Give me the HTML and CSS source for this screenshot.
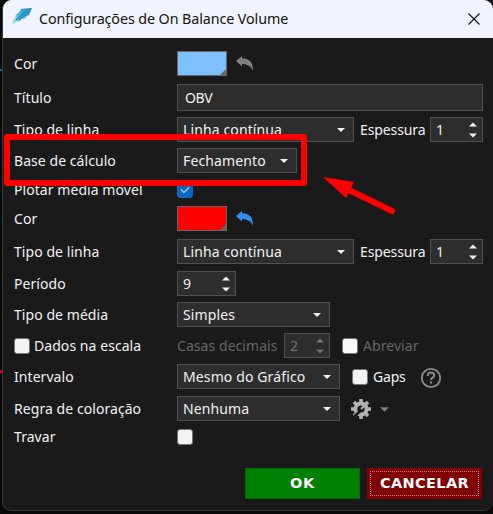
FILE: index.html
```html
<!DOCTYPE html>
<html lang="pt-BR">
<head>
<meta charset="utf-8">
<title>Configurações de On Balance Volume</title>
<link rel="stylesheet" href="styles.css">
</head>
<body>
<svg class="defs" width="0" height="0" aria-hidden="true">
  <symbol id="undo" viewBox="0 0 18 16"><path d="M0 5 6 0V2.2C13 2.2 17.5 6 17 15 15 10 11.5 8 6 8V10.5Z" fill="currentColor"/></symbol>
  <symbol id="down" viewBox="0 0 8 4"><path d="M0 0H8L4 4Z" fill="currentColor"/></symbol>
  <symbol id="updown" viewBox="0 0 8 16"><path d="M0 4.5 4 .5 8 4.5ZM0 11.5H8L4 15.5Z" fill="currentColor"/></symbol>
</svg>
<i class="edge edge-blue"></i><i class="edge edge-red"></i>
<main class="dialog">
  <header class="titlebar">
    <svg class="logo" width="21" height="18" viewBox="0 0 21 18"><defs><linearGradient id="sky" x1="0" y1="1" x2="1" y2="0"><stop offset="0" stop-color="#c5e8f4"/><stop offset=".5" stop-color="#4db4dc"/><stop offset="1" stop-color="#1488c0"/></linearGradient></defs><path d="M0 17 1 12 4 9 3 8 9 2 8 1 20 0 17 7 15 8 12 11 11 10 6 14 5 13Z" fill="url(#sky)"/><path d="M4 12 16 2M7 12 17 4" stroke="#1c8fc2" stroke-width="1.3"/></svg>
    <h1><span>Configurações de On Balance Volume</span></h1>
    <svg class="close" width="12" height="12" viewBox="0 0 12 12"><path d="M.5.5 11.5 11.5M11.5.5.5 11.5" stroke="#111" stroke-width="1.1"/></svg>
  </header>
  <section class="form">
    <div class="row after-8"><label class="name">Cor</label><span class="swatch blue"></span><svg class="undo"><use href="#undo"/></svg></div>
    <div class="row tall"><label class="name">Título</label><span class="field title-field">OBV</span></div>
    <div class="row"><label class="name">Tipo de linha</label><span class="field line">Linha contínua<svg class="down"><use href="#down"/></svg></span><label class="thick">Espessura</label><span class="field spin">1<svg class="updown"><use href="#updown"/></svg></span></div>
    <div class="row"><label class="name">Base de cálculo</label><span class="field base">Fechamento<svg class="down"><use href="#down"/></svg></span></div>
    <div class="row plot"><label class="name">Plotar média móvel</label><span class="check checked"><svg width="10" height="8" viewBox="0 0 10 8"><path d="M1 3.5 4 6.5 9 1.5" fill="none" stroke="#b4dcff" stroke-width="1.2"/></svg></span></div>
    <div class="row after-8"><label class="name">Cor</label><span class="swatch red"></span><svg class="undo active"><use href="#undo"/></svg></div>
    <div class="row after-7"><label class="name">Tipo de linha</label><span class="field line">Linha contínua<svg class="down"><use href="#down"/></svg></span><label class="thick">Espessura</label><span class="field spin">1<svg class="updown"><use href="#updown"/></svg></span></div>
    <div class="row"><label class="name">Período</label><span class="field period">9<svg class="updown"><use href="#updown"/></svg></span></div>
    <div class="row"><label class="name">Tipo de média</label><span class="field average">Simples<svg class="down"><use href="#down"/></svg></span></div>
    <div class="row"><label class="name with-check"><span class="check"></span>Dados na escala</label><span class="decimals">Casas decimais</span><span class="field places">2<svg class="updown"><use href="#updown"/></svg></span><span class="check short"></span><span class="muted">Abreviar</span></div>
    <div class="row after-7"><label class="name">Intervalo</label><span class="field wide">Mesmo do Gráfico<svg class="down"><use href="#down"/></svg></span><span class="check gap-check"></span><label class="gaps">Gaps</label><svg class="help" width="22" height="22" viewBox="0 0 22 22" fill="none" stroke="#8c8c8c"><circle cx="11" cy="11" r="9.2" stroke-width="1.8"/><path d="M7.8 9V8.5C7.8 6.5 9.2 5.5 11 5.5S14.2 6.6 14.2 8.4C14.2 10.7 11 10.5 11 13" stroke-width="2"/><path d="M11 14.5V16.5" stroke-width="2.2"/></svg></div>
    <div class="row"><label class="name">Regra de coloração</label><span class="field wide">Nenhuma<svg class="down"><use href="#down"/></svg></span><svg class="gear" width="22" height="22" viewBox="-11 -11 22 22"><path d="M0-10V-6M0 10V6M-10 0H-6M10 0H6M-7-7-4-4M7 7 4 4M-7 7-4 4M7-7 4-4" stroke="#b2b2b2" stroke-width="3.6"/><circle r="5.6" fill="none" stroke="#b2b2b2" stroke-width="4"/><path d="M-7 8-1 2" stroke="#1a1a1a" stroke-width="2.6"/><path d="M0 0 4-4" stroke="#b2b2b2" stroke-width="2"/></svg><svg class="menu-arrow"><use href="#down"/></svg></div>
    <div class="row last"><label class="name">Travar</label><span class="check"></span></div>
    <footer class="actions"><button class="ok">OK</button><button class="cancel"><span>CANCELAR</span></button></footer>
  </section>
</main>
<div class="highlight"></div>
<svg class="pointer" width="76" height="42" viewBox="0 0 76 42"><path d="M24 14 69 36" stroke="red" stroke-width="6" stroke-linecap="round"/><path d="M0 2 31 7 23 23Z" fill="red"/></svg>
</body>
</html>
```

FILE: styles.css
```css
* { box-sizing: border-box; }
body { margin: 0; width: 493px; height: 514px; overflow: hidden; background: #080808; color: #f2f2f2; font: 14px/20px "Noto Sans", sans-serif; }
.defs { position: absolute; }
.dialog { width: 491px; height: 511px; margin-left: 2px; overflow: hidden; background: #1a1a1a; border: 1px solid #3a3a3a; border-top: 0; border-right: 0; border-radius: 9px; }
.titlebar { height: 38px; margin-left: -1px; background: #f0f3fb; display: flex; align-items: center; padding: 0 13px 0 10px; color: #111; }
.logo { margin-top: -4px; }
h1 { margin: 0 auto 0 6px; font-size: 14.3px; font-weight: 400; line-height: 20px; letter-spacing: -.09px; }
.form { padding: 13px 10px 0 11px; }
.row { height: 25px; margin-bottom: 6px; display: flex; align-items: center; white-space: nowrap; letter-spacing: .06px; }
.name { width: 163px; flex: none; }
.after-8 { margin-bottom: 8px; }
.after-7 { margin-bottom: 7px; }
.tall { height: 27px; }
.plot { height: 21px; }
.last { height: 20px; margin-bottom: 0; }
.field { height: 25px; flex: none; display: flex; align-items: center; justify-content: space-between; padding: 0 8px 0 5px; border: 1px solid #505050; background: #2d2d2d; letter-spacing: .12px; }
.title-field { width: 306px; height: 27px; padding-left: 7px; letter-spacing: -.4px; }
.line { width: 177px; }
.base { width: 120px; }
.thick { width: 76px; padding-left: 6px; letter-spacing: -.1px; }
.spin { width: 53px; padding-right: 5px; }
.period { width: 59px; padding-right: 5px; }
.average { width: 153px; }
.wide { width: 163px; }
.down { width: 8px; height: 4px; }
.updown { width: 8px; height: 16px; }
.swatch { position: relative; width: 50px; height: 25px; border: 1px solid #666; }
.swatch::after { content: ""; position: absolute; right: 0; bottom: 0; border-left: 6px solid transparent; border-bottom: 6px solid #666; }
.blue { background: #80bfff; }
.red { background: red; }
.undo { width: 18px; height: 16px; margin-left: 9px; color: #808080; }
.undo.active { color: #2f8fee; }
.check { width: 16px; height: 16px; flex: none; border: 1px solid #777; border-radius: 3px; background: #f3f3f3; display: flex; align-items: center; justify-content: center; }
.check.checked { background: #0867c5; border-color: #0867c5; }
.with-check { display: flex; align-items: center; gap: 4px; }
.decimals { width: 107px; color: #666; }
.places { width: 46px; color: #747474; padding-right: 5px; }
.short { margin-left: 12px; background: #fafafa; }
.muted { margin-left: 5px; color: #666; }
.gap-check { margin-left: 12px; }
.gaps { width: 47px; margin-left: 5px; letter-spacing: -.2px; }
.help { margin-top: 3px; }
.gear { margin: 1px 0 0 10px; }
.menu-arrow { width: 9px; height: 5px; margin: 2px 0 0 8px; color: #808080; }
.actions { display: flex; justify-content: flex-end; gap: 7px; margin: 21px 1px 0 0; }
button { width: 115px; height: 31px; padding: 0; border: 1px solid #096609; border-radius: 0; background: #008000; color: #fff; font: bold 14.5px/25px "DejaVu Sans", sans-serif; }
.ok { letter-spacing: .6px; }
.cancel { padding: 2px; background: #800000; border-color: #8b0000; }
.cancel span { display: block; height: 25px; line-height: 23px; border: 1px dotted #d28080; letter-spacing: .35px; }
.highlight { position: absolute; left: 4px; top: 134px; width: 303px; height: 52px; border: 6px solid red; border-radius: 3px; }
.pointer { position: absolute; left: 323px; top: 175px; }
.edge { position: absolute; left: 0; width: 2px; height: 2px; background: #086ca4; }
.edge-blue { top: 69px; }
.edge-red { top: 370px; height: 3px; background: #e00000; }
```
